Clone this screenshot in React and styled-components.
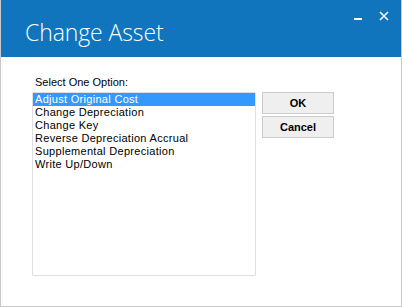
import React, { useState } from 'react';
import styled, { createGlobalStyle } from 'styled-components';

const options = [
  'Adjust Original Cost',
  'Change Depreciation',
  'Change Key',
  'Reverse Depreciation Accrual',
  'Supplemental Depreciation',
  'Write Up/Down',
];

const App = () => {
  const [selected, setSelected] = useState(0);
  return (
    <>
      <GlobalStyle />
      <Window>
        <TitleBar>
          <Title>Change Asset</Title>
          <Controls>
            <ControlButton aria-label="minimize">
              <svg width="8" height="10" viewBox="0 0 8 10">
                <rect x="0" y="7" width="8" height="2" fill="#fff" />
              </svg>
            </ControlButton>
            <ControlButton aria-label="close">
              <svg width="10" height="10" viewBox="0 0 10 10">
                <path d="M1 1 L9 9 M9 1 L1 9" stroke="#fff" strokeWidth="1.6" />
              </svg>
            </ControlButton>
          </Controls>
        </TitleBar>
        <Body>
          <Column>
            <Label>Select One Option:</Label>
            <ListBox>
              {options.map((opt, i) => (
                <Item key={opt} $active={i === selected} onClick={() => setSelected(i)}>
                  {opt}
                </Item>
              ))}
            </ListBox>
          </Column>
          <Buttons>
            <Button>OK</Button>
            <Button>Cancel</Button>
          </Buttons>
        </Body>
      </Window>
    </>
  );
};

const GlobalStyle = createGlobalStyle`
  html, body {
    margin: 0;
    padding: 0;
    background: #fff;
  }
  * { box-sizing: border-box; }
`;

const Window = styled.div`
  width: 402px;
  height: 307px;
  display: flex;
  flex-direction: column;
  background: #fff;
  border: 1px solid #c9c9c9;
  border-top: 0;
  overflow: hidden;
`;

const TitleBar = styled.div`
  height: 57px;
  margin: 0 -1px;
  background: #1075bd;
  display: flex;
  justify-content: space-between;
  align-items: flex-start;
  padding-left: 25px;
`;

const Title = styled.div`
  margin-top: 17px;
  font-family: "Open Sans", "Noto Sans", sans-serif;
  font-weight: 300;
  font-size: 23px;
  line-height: 30px;
  color: #fff;
  letter-spacing: -0.1px;
`;

const Controls = styled.div`
  display: flex;
  align-items: flex-start;
  gap: 16px;
  padding: 11px 13px 0 0;
`;

const ControlButton = styled.div`
  display: flex;
  width: 10px;
  height: 10px;
  justify-content: center;
`;

const Body = styled.div`
  display: flex;
  align-items: flex-start;
  padding: 19px 0 0 31px;
  gap: 6px;
`;

const Column = styled.div`
  display: flex;
  flex-direction: column;
`;

const Label = styled.div`
  font-family: "Liberation Sans", Arial, sans-serif;
  font-size: 11px;
  line-height: 13px;
  color: #000;
  padding-left: 3px;
  margin-bottom: 3px;
`;

const ListBox = styled.div`
  width: 224px;
  height: 184px;
  border: 1px solid #dfdfe3;
  border-radius: 1px;
  display: flex;
  flex-direction: column;
`;

const Item = styled.div`
  height: 13px;
  padding-left: 2px;
  font-family: "Liberation Sans", Arial, sans-serif;
  font-size: 11px;
  line-height: 13px;
  letter-spacing: 0.3px;
  color: ${(p) => (p.$active ? '#fff' : '#000')};
  background: ${(p) => (p.$active ? '#3399ff' : 'transparent')};
  white-space: nowrap;
`;

const Buttons = styled.div`
  display: flex;
  flex-direction: column;
  gap: 2px;
  margin-top: 16px;
`;

const Button = styled.div`
  width: 72px;
  height: 22px;
  display: flex;
  align-items: center;
  justify-content: center;
  background: #efefef;
  border: 1px solid #cccccc;
  font-family: "Liberation Sans", Arial, sans-serif;
  font-weight: bold;
  font-size: 11px;
  color: #000;
`;

export default App;
